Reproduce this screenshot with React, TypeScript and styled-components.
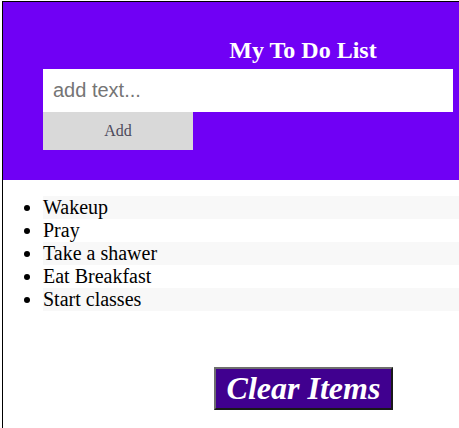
import styled, { createGlobalStyle } from 'styled-components';

const GlobalStyle = createGlobalStyle`
  html, body {
    margin: 0;
    padding: 0;
    overflow: hidden;
    background: #fff;
  }
  body {
    font-family: "Liberation Serif", "Times New Roman", serif;
  }
`

const Page = styled.div`
  width: 601px;
  min-height: 440px;
  margin: 1px 0 0 2px;
  border-top: 1px solid #000;
  border-left: 1px solid #000;
`

const Header = styled.header`
  background-color: #7000f5;
  padding: 34px 0 30px 40px;
  display: flex;
  flex-direction: column;
  align-items: flex-start;
`

const Title = styled.h2`
  margin: 0 0 5px -40px;
  width: 600px;
  text-align: center;
  color: #fff;
  font-size: 24px;
  font-weight: bold;
  line-height: 28px;
`

const TextInput = styled.input`
  width: 410px;
  height: 43px;
  box-sizing: border-box;
  border: none;
  outline: none;
  padding: 0 10px;
  font-family: "Liberation Sans", Arial, sans-serif;
  font-size: 20px;
  color: #333;
  &::placeholder {
    color: #757575;
  }
`

const AddButton = styled.button`
  width: 150px;
  height: 38px;
  border: none;
  background-color: #d9d9d9;
  color: #4d4a5c;
  font-family: "Liberation Serif", "Times New Roman", serif;
  font-size: 16px;
  cursor: pointer;
`

const List = styled.ul`
  margin: 16px 0;
  padding-left: 40px;
`

const Item = styled.li<{ $striped: boolean }>`
  font-size: 20px;
  line-height: 23px;
  color: #000;
  background-color: ${p => (p.$striped ? '#f8f8f8' : 'transparent')};
`

const Footer = styled.div`
  display: flex;
  justify-content: center;
  padding-top: 40px;
`

const ClearButton = styled.button`
  background-color: #40008f;
  color: #fff;
  border: 2px outset #6e6e6e;
  padding: 1px 11px;
  font-family: "Liberation Serif", "Times New Roman", serif;
  font-size: 32px;
  font-style: italic;
  font-weight: bold;
  line-height: 37px;
  cursor: pointer;
`

const items = ['Wakeup', 'Pray', 'Take a shawer', 'Eat Breakfast', 'Start classes'];

const App = () => {
  return (
    <>
      <GlobalStyle />
      <Page>
        <Header>
          <Title>My To Do List</Title>
          <TextInput placeholder="add text..." />
          <AddButton>Add</AddButton>
        </Header>
        <List>
          {items.map((item, i) => (
            <Item key={item} $striped={i % 2 === 0}>{item}</Item>
          ))}
        </List>
        <Footer>
          <ClearButton>Clear Items</ClearButton>
        </Footer>
      </Page>
    </>
  )
}

export default App;
